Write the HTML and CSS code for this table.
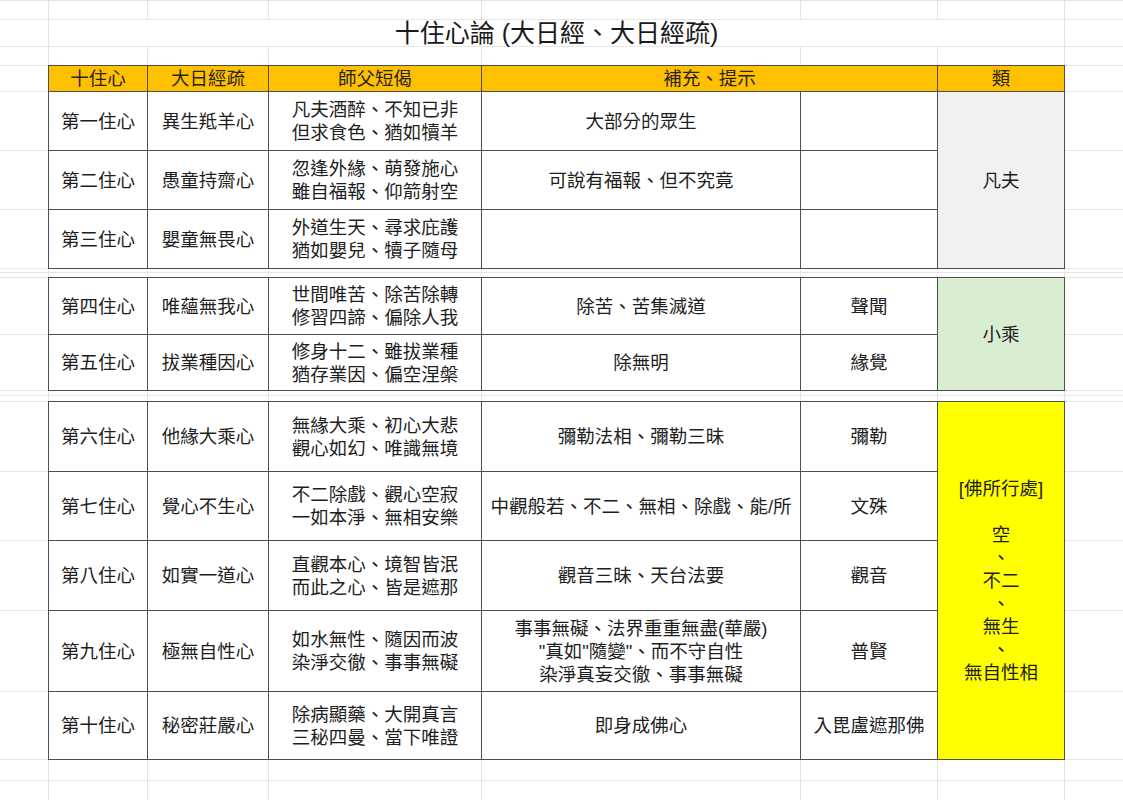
FILE: index.html
```html
<!DOCTYPE html>
<html lang="zh-Hant">
<head>
<meta charset="utf-8">
<title>十住心論</title>
<link rel="stylesheet" href="styles.css">
</head>
<body>
<div class="sheet">
  <div class="title">十住心論 (大日經、大日經疏)</div>

  <table class="grid block1">
    <colgroup><col class="c1"><col class="c2"><col class="c3"><col class="c4"><col class="c5"><col class="c6"></colgroup>
    <tr class="head">
      <th>十住心</th><th>大日經疏</th><th>師父短偈</th><th colspan="2">補充、提示</th><th>類</th>
    </tr>
    <tr class="h59">
      <td>第一住心</td><td>異生羝羊心</td><td>凡夫酒醉、不知已非<br>但求食色、猶如犢羊</td><td>大部分的眾生</td><td></td>
      <td rowspan="3" class="cat gray">凡夫</td>
    </tr>
    <tr class="h59">
      <td>第二住心</td><td>愚童持齋心</td><td>忽逢外緣、萌發施心<br>雖自福報、仰箭射空</td><td>可說有福報、但不究竟</td><td></td>
    </tr>
    <tr class="h59">
      <td>第三住心</td><td>嬰童無畏心</td><td>外道生天、尋求庇護<br>猶如嬰兒、犢子隨母</td><td></td><td></td>
    </tr>
  </table>

  <table class="grid block2">
    <colgroup><col class="c1"><col class="c2"><col class="c3"><col class="c4"><col class="c5"><col class="c6"></colgroup>
    <tr class="h57">
      <td>第四住心</td><td>唯蘊無我心</td><td>世間唯苦、除苦除轉<br>修習四諦、偏除人我</td><td>除苦、苦集滅道</td><td>聲聞</td>
      <td rowspan="2" class="cat green">小乘</td>
    </tr>
    <tr class="h56">
      <td>第五住心</td><td>拔業種因心</td><td>修身十二、雖拔業種<br>猶存業因、偏空涅槃</td><td>除無明</td><td>緣覺</td>
    </tr>
  </table>

  <table class="grid block3">
    <colgroup><col class="c1"><col class="c2"><col class="c3"><col class="c4"><col class="c5"><col class="c6"></colgroup>
    <tr class="h70">
      <td>第六住心</td><td>他緣大乘心</td><td>無緣大乘、初心大悲<br>觀心如幻、唯識無境</td><td>彌勒法相、彌勒三昧</td><td>彌勒</td>
      <td rowspan="5" class="cat yellow">[佛所行處]<br><br>空<br>、<br>不二<br>、<br>無生<br>、<br>無自性相</td>
    </tr>
    <tr class="h69">
      <td>第七住心</td><td>覺心不生心</td><td>不二除戲、觀心空寂<br>一如本淨、無相安樂</td><td>中觀般若、不二、無相、除戲、能/所</td><td>文殊</td>
    </tr>
    <tr class="h70">
      <td>第八住心</td><td>如實一道心</td><td>直觀本心、境智皆泯<br>而此之心、皆是遮那</td><td>觀音三昧、天台法要</td><td>觀音</td>
    </tr>
    <tr class="h81">
      <td>第九住心</td><td>極無自性心</td><td>如水無性、隨因而波<br>染淨交徹、事事無礙</td><td>事事無礙、法界重重無盡(華嚴)<br>"真如"隨變"、而不守自性<br>染淨真妄交徹、事事無礙</td><td>普賢</td>
    </tr>
    <tr class="h68">
      <td>第十住心</td><td>秘密莊嚴心</td><td>除病顯藥、大開真言<br>三秘四曼、當下唯證</td><td>即身成佛心</td><td>入毘盧遮那佛</td>
    </tr>
  </table>
</div>
</body>
</html>
```

FILE: styles.css
```css
html, body {
  margin: 0;
  padding: 0;
  background: #ffffff;
}

.sheet {
  width: 1123px;
  height: 800px;
  overflow: hidden;
  padding-top: 20px;
  box-sizing: border-box;
  font-family: "Liberation Sans", "Noto Sans CJK TC", sans-serif;
  color: #1e1e1e;
  background-color: #ffffff;
  background-repeat: no-repeat;
  background-image:
    linear-gradient(#e3e3e3, #e3e3e3),
    linear-gradient(#e3e3e3, #e3e3e3),
    linear-gradient(#e3e3e3, #e3e3e3),
    linear-gradient(#e3e3e3, #e3e3e3),
    linear-gradient(#e3e3e3, #e3e3e3),
    linear-gradient(#e3e3e3, #e3e3e3),
    linear-gradient(#e3e3e3, #e3e3e3),
    linear-gradient(#e6e6e6, #e6e6e6),
    linear-gradient(#e6e6e6, #e6e6e6),
    linear-gradient(#e6e6e6, #e6e6e6),
    linear-gradient(#e6e6e6, #e6e6e6),
    linear-gradient(#e6e6e6, #e6e6e6),
    linear-gradient(#e6e6e6, #e6e6e6),
    linear-gradient(#e6e6e6, #e6e6e6),
    linear-gradient(#e6e6e6, #e6e6e6),
    linear-gradient(#e6e6e6, #e6e6e6),
    linear-gradient(#e6e6e6, #e6e6e6),
    linear-gradient(#e6e6e6, #e6e6e6),
    linear-gradient(#e6e6e6, #e6e6e6),
    linear-gradient(#e6e6e6, #e6e6e6),
    linear-gradient(#e6e6e6, #e6e6e6),
    linear-gradient(#e6e6e6, #e6e6e6),
    linear-gradient(#e6e6e6, #e6e6e6),
    linear-gradient(#e6e6e6, #e6e6e6),
    linear-gradient(#e6e6e6, #e6e6e6),
    linear-gradient(#e6e6e6, #e6e6e6),
    linear-gradient(#e6e6e6, #e6e6e6);
  background-size:
    1px 100%, 1px 100%, 1px 100%, 1px 100%, 1px 100%, 1px 100%, 1px 100%,
    100% 1px, 100% 1px, 100% 1px, 100% 1px, 100% 1px, 100% 1px, 100% 1px,
    100% 1px, 100% 1px, 100% 1px, 100% 1px, 100% 1px, 100% 1px, 100% 1px,
    100% 1px, 100% 1px, 100% 1px, 100% 1px, 100% 1px, 100% 1px, 100% 1px;
  background-position:
    48px 0, 147px 0, 268px 0, 481px 0, 800px 0, 937px 0, 1064px 0,
    0 0, 0 19px, 0 46px, 0 65px, 0 91px, 0 150px, 0 209px,
    0 268px, 0 272px, 0 277px, 0 334px, 0 390px, 0 395px, 0 401px,
    0 471px, 0 540px, 0 610px, 0 691px, 0 759px, 0 780px;
}

.title {
  margin-left: 49px;
  width: 1015px;
  height: 26px;
  line-height: 26px;
  background: #ffffff;
  text-align: center;
  font-size: 25px;
  color: #1a1a1a;
}

.grid {
  margin-left: 48px;
  width: 1017px;
  table-layout: fixed;
  border-collapse: collapse;
  border: 1px solid #555555;
  background: #ffffff;
  font-size: 18.5px;
  line-height: 23px;
}

.block1 { margin-top: 19px; }
.block2 { margin-top: 8px; }
.block3 { margin-top: 10px; }

.c1 { width: 99px; }
.c2 { width: 121px; }
.c3 { width: 213px; }
.c4 { width: 319px; }
.c5 { width: 137px; }
.c6 { width: 127px; }

.grid th,
.grid td {
  border: 1px solid #4e4e4e;
  padding: 0;
  text-align: center;
  vertical-align: middle;
  font-weight: 400;
  white-space: nowrap;
}

.head th {
  background: #ffc000;
  color: #2a2418;
  height: 25px;
}

.h59 td { height: 58px; }
.h57 td { height: 56px; }
.h56 td { height: 55px; }
.h70 td { height: 69px; }
.h69 td { height: 68px; }
.h81 td { height: 80px; }
.h68 td { height: 67px; }

.grid td.cat { height: auto; }

.gray { background: #f1f1f1; }
.green { background: #d9eed1; }
.yellow { background: #ffff00; }
```
